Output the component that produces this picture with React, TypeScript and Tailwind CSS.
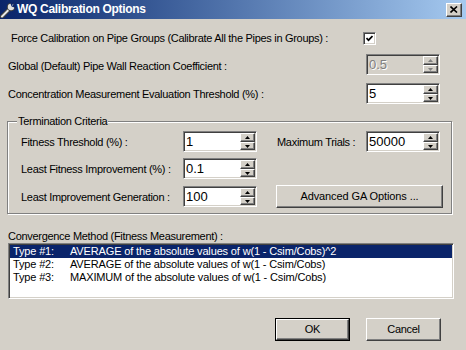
import React from "react";

const raised =
  "border border-t-white border-l-white border-b-[#404040] border-r-[#404040] shadow-[inset_-1px_-1px_0_#808080]";
const sunken =
  "border border-t-[#808080] border-l-[#808080] border-b-white border-r-white shadow-[inset_1px_1px_0_#404040,inset_-1px_-1px_0_#d4d0c8]";

function Arrow({ up, disabled }: { up?: boolean; disabled?: boolean }) {
  const fill = disabled ? "#808080" : "#000000";
  return (
    <svg width="5" height="3" viewBox="0 0 5 3" className="block">
      {up ? <polygon points="2.5,0 5,3 0,3" fill={fill} /> : <polygon points="0,0 5,0 2.5,3" fill={fill} />}
    </svg>
  );
}

function SpinBox({ value, disabled }: { value: string; disabled?: boolean }) {
  return (
    <div className={`${sunken} w-[74px] h-[21px] flex p-[1px] ${disabled ? "bg-[#d4d0c8]" : "bg-white"}`}>
      <div
        className={`flex-1 pl-[1px] pt-[2px] text-[13px] leading-[14px] tracking-normal ${
          disabled ? "text-[#808080] [text-shadow:1px_1px_0_#fff]" : "text-black"
        }`}
      >
        {value}
      </div>
      <div className="w-[15px] flex flex-col">
        <div className={`${raised} bg-[#d4d0c8] h-[9px] flex items-center justify-center`}>
          <Arrow up disabled={disabled} />
        </div>
        <div className={`${raised} bg-[#d4d0c8] h-[8px] flex items-center justify-center`}>
          <Arrow disabled={disabled} />
        </div>
      </div>
    </div>
  );
}

function Wrench() {
  return (
    <svg width="16" height="16" viewBox="0 0 16 16">
      <path d="M2 14.5 L9 7.5" stroke="#404040" strokeWidth="4" strokeLinecap="round" />
      <path d="M2 14.5 L9 7.5" stroke="#e8e8e8" strokeWidth="2" strokeLinecap="round" />
      <circle cx="11" cy="5" r="4.2" fill="#404040" />
      <circle cx="11" cy="5" r="3.2" fill="#e0e0e0" />
      <path d="M11.5 4.5 L15 1 L16 0 L16 6 Z" fill="#0a246a" />
      <path d="M11.5 4.5 L14 0 L10 0 Z" fill="#0a246a" />
    </svg>
  );
}

const rows = [
  ["Type #1:", "AVERAGE of the absolute values of w(1 - Csim/Cobs)^2"],
  ["Type #2:", "AVERAGE of the absolute values of w(1 - Csim/Cobs)"],
  ["Type #3:", "MAXIMUM of the absolute values of w(1 - Csim/Cobs)"],
];

export default function App() {
  return (
    <div className="w-[466px] h-[350px] bg-[#d4d0c8] overflow-hidden flex flex-col text-[11px] leading-[13px] tracking-[-0.3px] text-black font-['Liberation_Sans',Arial,sans-serif]">
      {/* title bar */}
      <div className="h-[19px] flex items-center bg-linear-to-r from-[#0a246a] to-[#a6caf0]">
        <Wrench />
        <span className="ml-[1px] text-white font-bold text-[12px] tracking-[-0.3px]">WQ Calibration Options</span>
        <div className={`${raised} bg-[#d4d0c8] ml-auto mr-[4px] w-[16px] h-[14px] flex items-center justify-center`}>
          <svg width="8" height="7" viewBox="0 0 8 7">
            <path d="M0.5 0.5 L7 6.5 M7 0.5 L0.5 6.5" stroke="#000" strokeWidth="1.6" />
          </svg>
        </div>
      </div>

      <div className="px-[8px] flex flex-col">
        <div className="mt-[13px] h-[13px] flex items-center">
          <span className="w-[355px] pl-[3px]">
            Force Calibration on Pipe Groups (Calibrate All the Pipes in Groups) :
          </span>
          <div className={`${sunken} bg-white w-[13px] h-[13px] flex items-center justify-center`}>
            <svg width="7" height="7" viewBox="0 0 7 7">
              <polyline points="0.5,3 2.5,5.2 6.5,1" fill="none" stroke="#000" strokeWidth="1.7" />
            </svg>
          </div>
        </div>

        <div className="mt-[9px] h-[21px] flex items-center">
          <span className="w-[358px] pt-[4px]">Global (Default) Pipe Wall Reaction Coefficient :</span>
          <SpinBox value="0.5" disabled />
        </div>

        <div className="mt-[8px] h-[21px] flex items-center">
          <span className="w-[358px] pt-[2px]">Concentration Measurement Evaluation Threshold (%) :</span>
          <SpinBox value="5" />
        </div>

        {/* group box */}
        <div className="relative mt-[17px] -ml-[1px] w-[445px] h-[93px] border border-[#808080] shadow-[1px_1px_0_#fff,inset_1px_1px_0_#fff] pl-[13px] pt-[9px] flex flex-col">
          <span className="absolute left-[9px] -top-[7px] px-[1px] bg-[#d4d0c8]">Termination Criteria</span>
          <div className="h-[21px] flex items-center">
            <span className="w-[162px] pt-[1px]">Fitness Threshold (%) :</span>
            <SpinBox value="1" />
            <span className="ml-[20px] w-[89px] pt-[1px]">Maximum Trials :</span>
            <SpinBox value="50000" />
          </div>
          <div className="mt-[6px] h-[21px] flex items-center">
            <span className="w-[162px] pt-[1px]">Least Fitness Improvement (%) :</span>
            <SpinBox value="0.1" />
          </div>
          <div className="mt-[7px] h-[21px] flex items-center">
            <span className="w-[162px] pt-[1px]">Least Improvement Generation :</span>
            <SpinBox value="100" />
            <button
              className={`${raised} bg-[#d4d0c8] ml-[19px] w-[167px] h-[23px] tracking-[-0.1px] flex items-center justify-center`}
            >
              Advanced GA Options ...
            </button>
          </div>
        </div>

        <div className="mt-[16px] h-[13px]">Convergence Method (Fitness Measurement) :</div>
        <div className={`${sunken} bg-white w-[446px] h-[56px] p-[1px] flex flex-col tracking-[-0.15px]`}>
          {rows.map(([t, d], i) => (
            <div
              key={t}
              className={`h-[13px] leading-[13px] flex pl-[3px] ${i === 0 ? "bg-[#0a246a] text-white" : ""}`}
            >
              <span className="w-[57px]">{t}</span>
              <span>{d}</span>
            </div>
          ))}
        </div>

        <div className="mt-[19px] flex justify-end pr-[17px] gap-[16px]">
          <button className="w-[75px] h-[23px] border border-black">
            <div className={`${raised} bg-[#d4d0c8] w-full h-full flex items-center justify-center`}>OK</div>
          </button>
          <button className={`${raised} bg-[#d4d0c8] w-[75px] h-[23px] flex items-center justify-center`}>
            Cancel
          </button>
        </div>
      </div>
    </div>
  );
}
